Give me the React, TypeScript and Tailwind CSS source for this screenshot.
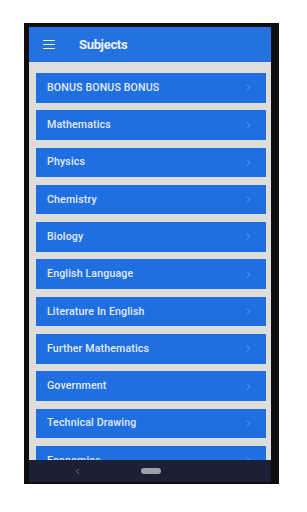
import { ChevronRight } from 'lucide-react';

const subjects = [
  'BONUS BONUS BONUS',
  'Mathematics',
  'Physics',
  'Chemistry',
  'Biology',
  'English Language',
  'Literature In English',
  'Further Mathematics',
  'Government',
  'Technical Drawing',
  'Economics',
];

const App = () => {
  return (
    <div className="w-[307px] h-[512px] bg-white pt-[23px] pl-[24px] font-['Roboto',sans-serif]">
      {/* phone frame */}
      <div className="w-[255px] h-[461px] bg-[#0d0d10] pt-[4px] pl-[5px] pr-[8px] pb-[2px] flex flex-col">
        <header className="h-[35px] shrink-0 bg-[#2471e2] flex items-center">
          <div className="ml-[14px] w-[12px] flex flex-col gap-[2.5px]">
            <span className="h-[1.5px] bg-[#e8eefc] rounded" />
            <span className="h-[1.5px] bg-[#e8eefc] rounded" />
            <span className="h-[1.5px] bg-[#e8eefc] rounded" />
          </div>
          <h1 className="ml-[24px] text-[13px] font-bold text-[#eef3fd] tracking-tight">Subjects</h1>
        </header>

        <div className="flex-1 overflow-hidden bg-[#dddedc] pt-[11px] pl-[7px] pr-[5px] flex flex-col gap-[7.8px]">
          {subjects.map((s) => (
            <div
              key={s}
              className="h-[29.5px] shrink-0 bg-[#1f6fe3] flex items-center justify-between pl-[11px] pr-[12px]"
            >
              <span className="text-[10.6px] font-medium text-[#e4ecfa] tracking-[0.15px]">{s}</span>
              <ChevronRight size={11} strokeWidth={1.5} className="text-[#86abec]" />
            </div>
          ))}
        </div>

        <nav className="h-[22px] shrink-0 bg-[#1c2034] flex items-center">
          <ChevronRight size={9} strokeWidth={2} className="ml-[44px] rotate-180 text-[#8d93a3]" />
          <span className="ml-[59px] w-[20px] h-[6px] rounded-full bg-[#9ca0a8]" />
        </nav>
      </div>
    </div>
  );
};

export default App;
